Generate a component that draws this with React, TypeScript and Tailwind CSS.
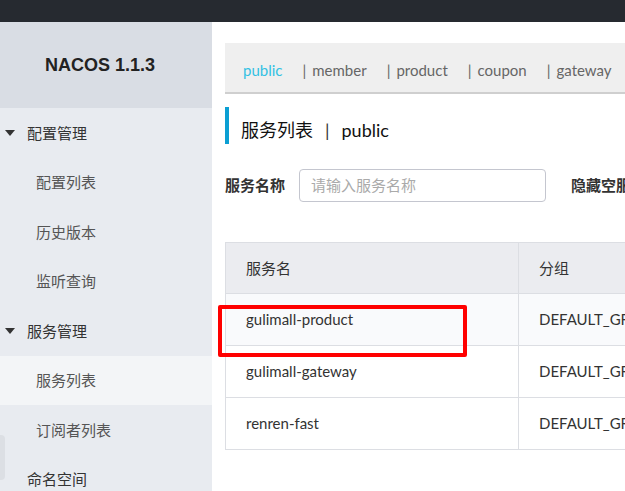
import React from 'react';

const font = { fontFamily: 'Lato, "Noto Sans CJK SC", sans-serif' };

const menu = [
  { label: '配置管理', kind: 'group' },
  { label: '配置列表', kind: 'item' },
  { label: '历史版本', kind: 'item' },
  { label: '监听查询', kind: 'item' },
  { label: '服务管理', kind: 'group' },
  { label: '服务列表', kind: 'item', active: true },
  { label: '订阅者列表', kind: 'item' },
  { label: '命名空间', kind: 'plain' },
];

const namespaces = ['public', 'member', 'product', 'coupon', 'gateway'];

const services = ['gulimall-product', 'gulimall-gateway', 'renren-fast'];

const Caret = () => (
  <svg width="10" height="6" viewBox="0 0 10 6" className="absolute left-[5px] top-1/2 -translate-y-1/2">
    <path d="M0 0 L10 0 L5 6 Z" fill="#333" />
  </svg>
);

const App: React.FC = () => {
  return (
    <div className="w-[625px] h-[491px] overflow-hidden bg-white flex flex-col" style={font}>
      {/* top bar */}
      <div className="h-[22px] shrink-0 bg-[#262a30]"></div>

      <div className="flex flex-1 min-h-0">
        {/* sidebar */}
        <div className="w-[212px] shrink-0 bg-[#e8ebf0] relative">
          <div className="h-[86px] bg-[#d9dde4] flex items-center justify-center pr-[12px]">
            <span className="text-[18px] font-bold text-[#222]" style={{ fontFamily: '"Liberation Sans", Arial, sans-serif' }}>
              NACOS 1.1.3
            </span>
          </div>
          {menu.map((m) => (
            <div
              key={m.label}
              className={`h-[49.5px] relative flex items-center text-[15px] ${
                m.kind === 'item' ? 'pl-[36px] text-[#555]' : 'pl-[27px] text-[#333]'
              } ${m.active ? 'bg-[#f3f5f7]' : ''}`}
            >
              {m.kind === 'group' && <Caret />}
              {m.label}
            </div>
          ))}
          <div className="absolute left-0 top-[413px] w-[5px] h-[45px] bg-[#dcdfe4] rounded-r-[4px]"></div>
        </div>

        {/* main */}
        <div className="flex-1 min-w-0 pl-[13px] pt-[21px] overflow-hidden">
          <div className="h-[51px] bg-[#efefef] border-b-2 border-[#cfcfcf] flex items-center pl-[18px] pt-[5px] text-[15px] whitespace-nowrap">
            {namespaces.map((n, i) => (
              <span key={n} className="mr-[20px] flex items-center shrink-0">
                {i > 0 && <span className="text-[#666] mr-[6px]">|</span>}
                <span className={i === 0 ? 'text-[#33c1e3]' : 'text-[#666]'}>{n}</span>
              </span>
            ))}
          </div>

          <div className="mt-[13px] h-[37px] border-l-4 border-[#0b9fd3] flex items-center pl-[12px] pt-[10px] text-[18px] text-[#111] whitespace-nowrap">
            <span>服务列表</span>
            <span className="mx-[12px] text-[#333]">|</span>
            <span>public</span>
          </div>

          <div className="mt-[25px] h-[33px] flex items-center whitespace-nowrap text-[15px]">
            <span className="font-bold text-[#333] w-[74px] shrink-0">服务名称</span>
            <div className="w-[247px] shrink-0 h-[33px] border border-[#c4c6cf] rounded-[4px] flex items-center pl-[11px] text-[#aaa]">
              请输入服务名称
            </div>
            <span className="ml-[25px] shrink-0 font-bold text-[#333]">隐藏空服务</span>
          </div>

          <div className="mt-[40px] relative w-[420px]">
            <div className="flex h-[52px] bg-[#ebecf0] border border-[#dcdee3] text-[15px] text-[#333]">
              <div className="w-[293px] shrink-0 border-r border-[#dcdee3] flex items-center pl-[20px]">服务名</div>
              <div className="flex items-center pl-[20px]">分组</div>
            </div>
            {services.map((s, i) => (
              <div
                key={s}
                className={`flex h-[52px] border-x border-b border-[#dcdee3] text-[15px] text-[#333] ${
                  i === 0 ? 'bg-[#f9fafc]' : 'bg-white'
                }`}
              >
                <div className="w-[293px] shrink-0 border-r border-[#dcdee3] flex items-center pl-[20px]">{s}</div>
                <div className="flex items-center pl-[20px] whitespace-nowrap">DEFAULT_GROUP</div>
              </div>
            ))}
            <div className="absolute left-[-7px] top-[63px] w-[249px] h-[52px] border-4 border-[#ff0000] rounded-[2px]"></div>
          </div>
        </div>
      </div>
    </div>
  );
};

export default App;
